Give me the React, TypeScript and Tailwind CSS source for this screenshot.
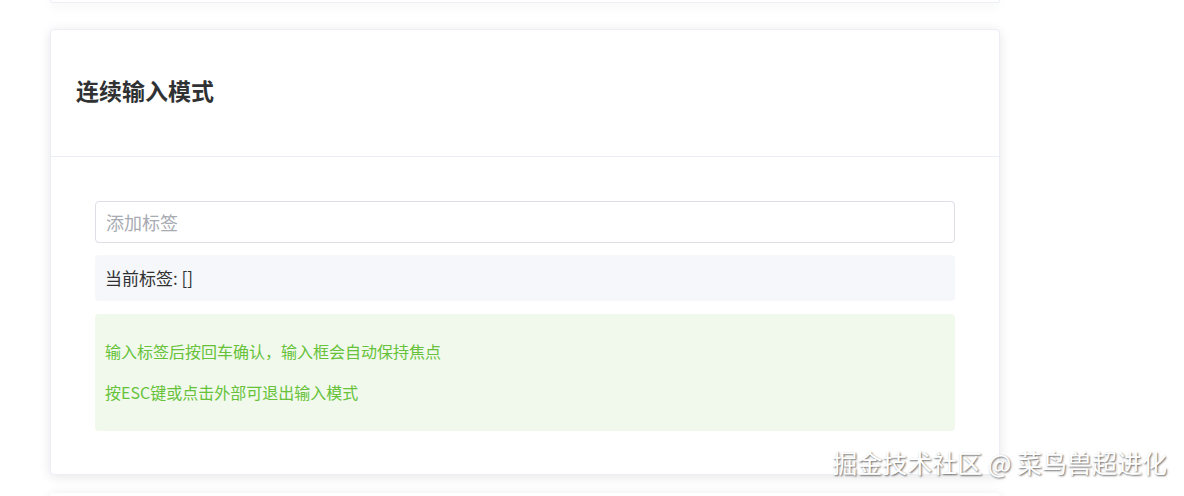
export default function App() {
  return (
    <div
      className="relative w-[1184px] h-[496px] overflow-hidden bg-white"
      style={{ fontFamily: '"Noto Sans CJK SC", "Noto Sans", sans-serif' }}
    >
      <div className="flex flex-col gap-[26px] pl-[50px] w-[1000px]">
        <div className="h-[3px] w-[950px] bg-white border-x border-b border-[#ebeef5] rounded-b-[4px] shadow-[0_2px_12px_0_rgba(0,0,0,0.1)]" />
        <div className="w-[950px] h-[446px] bg-white border border-[#ebeef5] rounded-[4px] shadow-[0_2px_12px_0_rgba(0,0,0,0.1)] flex flex-col">
          <div className="h-[127px] flex items-center px-[25px] pb-[6px] border-b border-[#ebeef5]">
            <h2 className="text-[23px] font-bold text-[#303133] leading-none">连续输入模式</h2>
          </div>
          <div className="px-[44px] pt-[44px] flex flex-col">
            <input
              className="h-[42px] w-full border border-[#dcdfe6] rounded-[4px] px-[10px] text-[18px] text-[#606266] placeholder:text-[#a8abb2] outline-none bg-white"
              placeholder="添加标签"
            />
            <div className="mt-[12px] h-[46px] bg-[#f5f7fa] rounded-[4px] px-[10px] flex items-center text-[17px] text-[#303133]">
              当前标签: []
            </div>
            <div className="mt-[13px] h-[117px] bg-[#f0f9eb] rounded-[4px] px-[10px] pt-[25px] flex flex-col gap-[17px] text-[16px] leading-[24px] text-[#67c23a]">
              <p>输入标签后按回车确认，输入框会自动保持焦点</p>
              <p>按ESC键或点击外部可退出输入模式</p>
            </div>
          </div>
        </div>
        <div className="h-[20px] w-[950px] bg-white rounded-[4px] shadow-[0_2px_12px_0_rgba(0,0,0,0.1)] -mt-[8px]" />
      </div>
      <div className="absolute right-[17px] top-[444px] text-[25px] leading-[36px] text-white [text-shadow:1px_1px_2px_rgba(0,0,0,0.6)] whitespace-nowrap">
        掘金技术社区 @ 菜鸟兽超进化
      </div>
    </div>
  );
}
